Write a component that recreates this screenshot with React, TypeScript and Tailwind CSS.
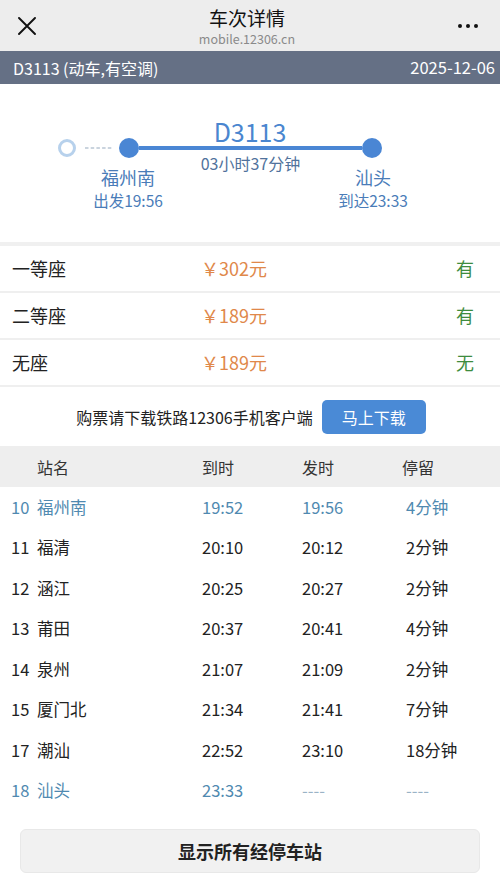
import React from "react";

const font = { fontFamily: '"Noto Sans CJK SC", "Noto Sans", sans-serif' };

const stops = [
  { no: "10", name: "福州南", arr: "19:52", dep: "19:56", stay: "4分钟", hl: true },
  { no: "11", name: "福清", arr: "20:10", dep: "20:12", stay: "2分钟" },
  { no: "12", name: "涵江", arr: "20:25", dep: "20:27", stay: "2分钟" },
  { no: "13", name: "莆田", arr: "20:37", dep: "20:41", stay: "4分钟" },
  { no: "14", name: "泉州", arr: "21:07", dep: "21:09", stay: "2分钟" },
  { no: "15", name: "厦门北", arr: "21:34", dep: "21:41", stay: "7分钟" },
  { no: "17", name: "潮汕", arr: "22:52", dep: "23:10", stay: "18分钟" },
  { no: "18", name: "汕头", arr: "23:33", dep: "----", stay: "----", hl: true, last: true },
];

const seats = [
  { name: "一等座", price: "￥302元", left: "有" },
  { name: "二等座", price: "￥189元", left: "有" },
  { name: "无座", price: "￥189元", left: "无" },
];

export default function App() {
  return (
    <div className="w-[500px] h-[887px] bg-white overflow-hidden text-[#222]" style={font}>
      {/* Top nav */}
      <div className="h-[51px] bg-[#ededed] flex items-center px-[18px]">
        <svg width="18" height="18" viewBox="0 0 18 18" className="shrink-0">
          <path d="M1 1 L17 17 M17 1 L1 17" stroke="#111" strokeWidth="1.9" strokeLinecap="round" />
        </svg>
        <div className="flex-1 self-start pt-[7px] flex flex-col items-center">
          <div className="text-[19px] leading-[22px] text-[#111]">车次详情</div>
          <div className="text-[12.5px] leading-[14px] text-[#8a8a8a] mt-[3px]">mobile.12306.cn</div>
        </div>
        <div className="flex gap-[4px] mr-[4px]">
          <span className="w-[4px] h-[4px] rounded-full bg-[#111]" />
          <span className="w-[4px] h-[4px] rounded-full bg-[#111]" />
          <span className="w-[4px] h-[4px] rounded-full bg-[#111]" />
        </div>
      </div>

      {/* Train bar */}
      <div className="h-[33px] bg-[#657085] flex items-center justify-between pl-[13px] pr-[5px] text-white text-[16px]">
        <span>D3113 (动车,有空调)</span>
        <span className="text-[16.5px]">2025-12-06</span>
      </div>

      {/* Route */}
      <div className="h-[162px] pt-[32px] border-b-[4px] border-[#f0f0f0]">
        <div className="text-center text-[25px] leading-[30px] text-[#4a86cf]">D3113</div>
        <div className="flex items-center h-[20px] mt-[-8px] pl-[58px]">
          <span className="w-[18px] h-[18px] rounded-full border-[3.5px] border-[#b7d1ec] shrink-0" />
          <svg width="28" height="2" viewBox="0 0 28 2" className="ml-[9px] shrink-0">
            <line x1="0" y1="1" x2="28" y2="1" stroke="#b9c6d4" strokeWidth="1.6" strokeDasharray="3.5 2.2" />
          </svg>
          <span className="w-[20px] h-[20px] rounded-full bg-[#4a86d4] ml-[6px] shrink-0" />
          <span className="w-[223px] h-[4px] bg-[#4a86d4]" />
          <span className="w-[20px] h-[20px] rounded-full bg-[#4a86d4] shrink-0" />
        </div>
        <div className="flex mt-[-5px] pl-[68px]">
          <div className="w-[120px] flex flex-col items-center pt-[12px] text-[#4a7cb8]">
            <span className="text-[18px] leading-[24px]">福州南</span>
            <span className="text-[15.5px] leading-[22px]">出发19:56</span>
          </div>
          <div className="w-[125px] text-center text-[16px] leading-[20px] text-[#50729c]">03小时37分钟</div>
          <div className="w-[120px] flex flex-col items-center pt-[12px] text-[#4a7cb8]">
            <span className="text-[18px] leading-[24px]">汕头</span>
            <span className="text-[15.5px] leading-[22px]">到达23:33</span>
          </div>
        </div>
      </div>

      {/* Seats */}
      {seats.map((s) => (
        <div key={s.name} className="h-[47px] flex items-center border-b-[2px] border-[#efefef] pl-[12px] text-[18px]">
          <span className="w-[189px]">{s.name}</span>
          <span className="flex-1 text-[#e0884a]">{s.price}</span>
          <span className="w-[44px] text-[#3e8c3e]">{s.left}</span>
        </div>
      ))}

      {/* Download */}
      <div className="h-[59px] flex items-center justify-center gap-[9px] pl-[2px]">
        <span className="text-[16px] text-[#222]">购票请下载铁路12306手机客户端</span>
        <span className="w-[104px] h-[34px] rounded-[5px] bg-[#4a8ad6] text-white text-[16px] flex items-center justify-center">马上下载</span>
      </div>

      {/* Table header */}
      <div className="h-[41px] bg-[#eeeeee] flex items-center pl-[37px] text-[16px] text-[#333]">
        <span className="w-[165px]">站名</span>
        <span className="w-[100px]">到时</span>
        <span className="w-[100px]">发时</span>
        <span className="flex-1">停留</span>
      </div>

      {stops.map((r) => (
        <div
          key={r.no}
          className={
            "h-[40.5px] flex items-center pl-[11px] text-[16.5px] " + (r.hl ? "text-[#4f89b0]" : "text-[#222]")
          }
        >
          <span className="w-[26px]">{r.no}</span>
          <span className="w-[165px]">{r.name}</span>
          <span className="w-[100px]">{r.arr}</span>
          <span className={"w-[104px] " + (r.last ? "text-[#9ab3c6]" : "")}>{r.dep}</span>
          <span className={"flex-1 " + (r.last ? "text-[#9ab3c6]" : "")}>{r.stay}</span>
        </div>
      ))}

      <div className="px-[20px] mt-[18px]">
        <div className="h-[44px] rounded-[6px] bg-[#f1f1f1] border border-[#e8e8e8] flex items-center justify-center text-[18px] font-bold text-[#222]">
          显示所有经停车站
        </div>
      </div>
    </div>
  );
}
